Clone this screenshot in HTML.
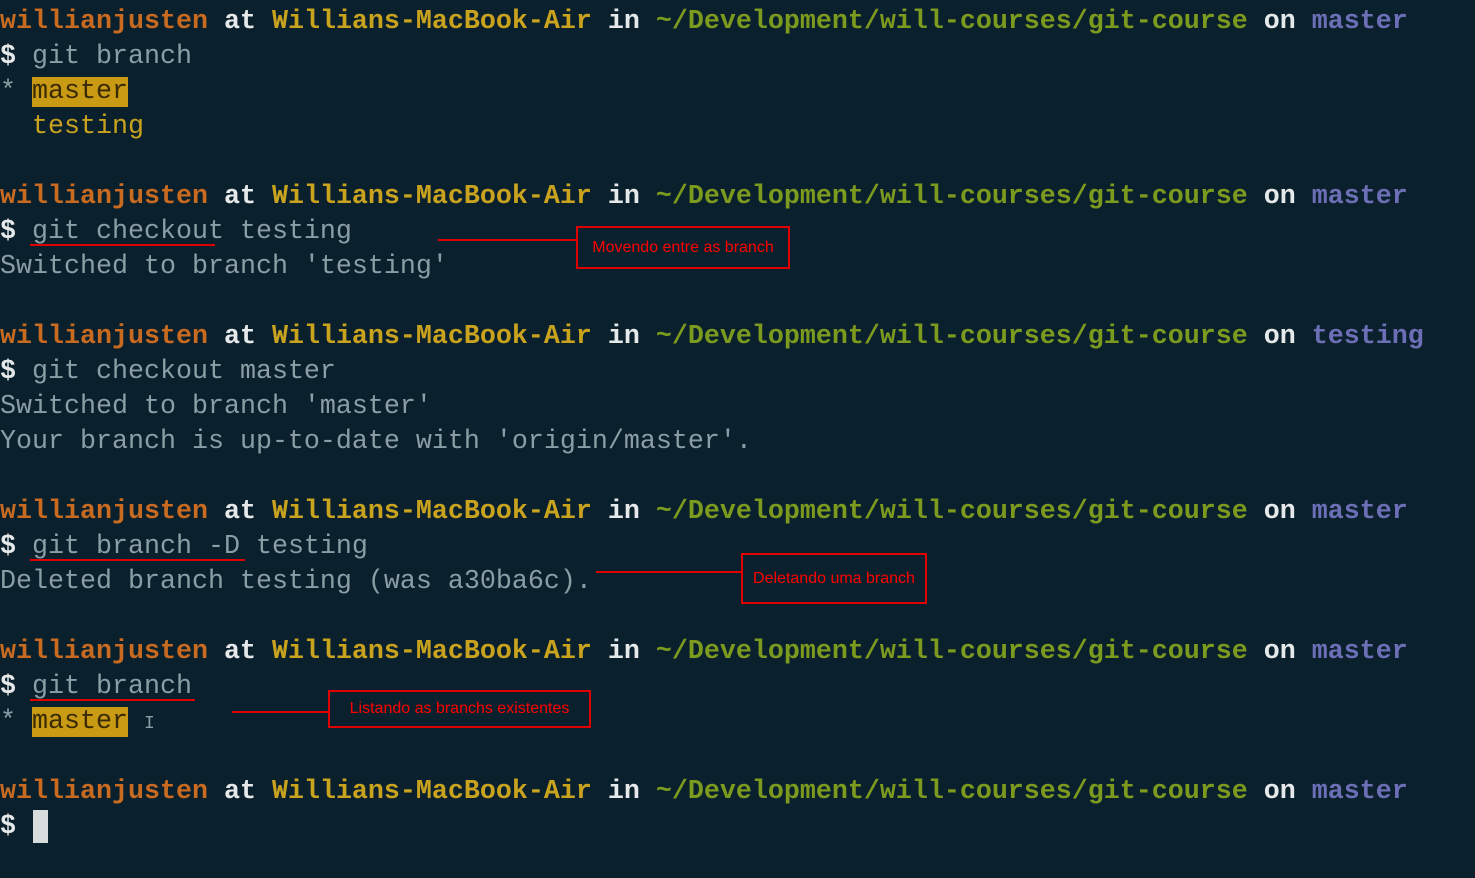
<!DOCTYPE html>
<html><head><meta charset="utf-8"><style>
html,body{margin:0;padding:0}
body{width:1475px;height:878px;background:#0a202d;overflow:hidden;position:relative;font-family:"Liberation Mono",monospace;font-size:26.67px;}
.l{position:absolute;left:0;height:35px;line-height:35px;white-space:pre;color:#8b9ea5;margin-top:3px}
.p{font-weight:bold}
.o{color:#c86a20}.w{color:#e6e9ea}.y{color:#c9a31e}.g{color:#7c9a1e}.b{color:#6d6fb6}
.hl{background:#c99a14;color:#3a2a05}
.box{position:absolute;border:2px solid #e00000;color:#f00;font-family:"Liberation Sans",sans-serif;font-size:16px;display:flex;align-items:center;justify-content:center;box-sizing:border-box}
.ln{position:absolute;height:2px;background:#e00000}
</style></head><body>
<div class="l p" style="top:2px"><span class="o">willianjusten</span> <span class="w">at</span> <span class="y">Willians-MacBook-Air</span> <span class="w">in</span> <span class="g">~/Development/will-courses/git-course</span> <span class="w">on</span> <span class="b">master</span></div>
<div class="l" style="top:37px"><span class="w p">$</span> git branch</div>
<div class="l" style="top:72px">* <span class="hl">master</span></div>
<div class="l y" style="top:107px">  testing</div>
<div class="l p" style="top:177px"><span class="o">willianjusten</span> <span class="w">at</span> <span class="y">Willians-MacBook-Air</span> <span class="w">in</span> <span class="g">~/Development/will-courses/git-course</span> <span class="w">on</span> <span class="b">master</span></div>
<div class="l" style="top:212px"><span class="w p">$</span> git checkout testing</div>
<div class="l" style="top:247px">Switched to branch 'testing'</div>
<div class="l p" style="top:317px"><span class="o">willianjusten</span> <span class="w">at</span> <span class="y">Willians-MacBook-Air</span> <span class="w">in</span> <span class="g">~/Development/will-courses/git-course</span> <span class="w">on</span> <span class="b">testing</span></div>
<div class="l" style="top:352px"><span class="w p">$</span> git checkout master</div>
<div class="l" style="top:387px">Switched to branch 'master'</div>
<div class="l" style="top:422px">Your branch is up-to-date with 'origin/master'.</div>
<div class="l p" style="top:492px"><span class="o">willianjusten</span> <span class="w">at</span> <span class="y">Willians-MacBook-Air</span> <span class="w">in</span> <span class="g">~/Development/will-courses/git-course</span> <span class="w">on</span> <span class="b">master</span></div>
<div class="l" style="top:527px"><span class="w p">$</span> git branch -D testing</div>
<div class="l" style="top:562px">Deleted branch testing (was a30ba6c).</div>
<div class="l p" style="top:632px"><span class="o">willianjusten</span> <span class="w">at</span> <span class="y">Willians-MacBook-Air</span> <span class="w">in</span> <span class="g">~/Development/will-courses/git-course</span> <span class="w">on</span> <span class="b">master</span></div>
<div class="l" style="top:667px"><span class="w p">$</span> git branch</div>
<div class="l" style="top:702px">* <span class="hl">master</span> <span style="font-size:18px">I</span></div>
<div class="l p" style="top:772px"><span class="o">willianjusten</span> <span class="w">at</span> <span class="y">Willians-MacBook-Air</span> <span class="w">in</span> <span class="g">~/Development/will-courses/git-course</span> <span class="w">on</span> <span class="b">master</span></div>
<div class="l" style="top:807px"><span class="w p">$</span></div>
<div style="position:absolute;left:33px;top:810px;width:15px;height:33px;background:#d8dcdd"></div>

<div class="ln" style="left:30px;top:244px;width:185px"></div>
<div class="ln" style="left:438px;top:239px;width:138px"></div>
<div class="box" style="left:576px;top:226px;width:214px;height:43px">Movendo entre as branch</div>

<div class="ln" style="left:30px;top:559px;width:215px"></div>
<div class="ln" style="left:596px;top:571px;width:145px"></div>
<div class="box" style="left:741px;top:553px;width:186px;height:51px">Deletando uma branch</div>

<div class="ln" style="left:30px;top:699px;width:165px"></div>
<div class="ln" style="left:232px;top:711px;width:96px"></div>
<div class="box" style="left:328px;top:690px;width:263px;height:38px">Listando as branchs existentes</div>
</body></html>
